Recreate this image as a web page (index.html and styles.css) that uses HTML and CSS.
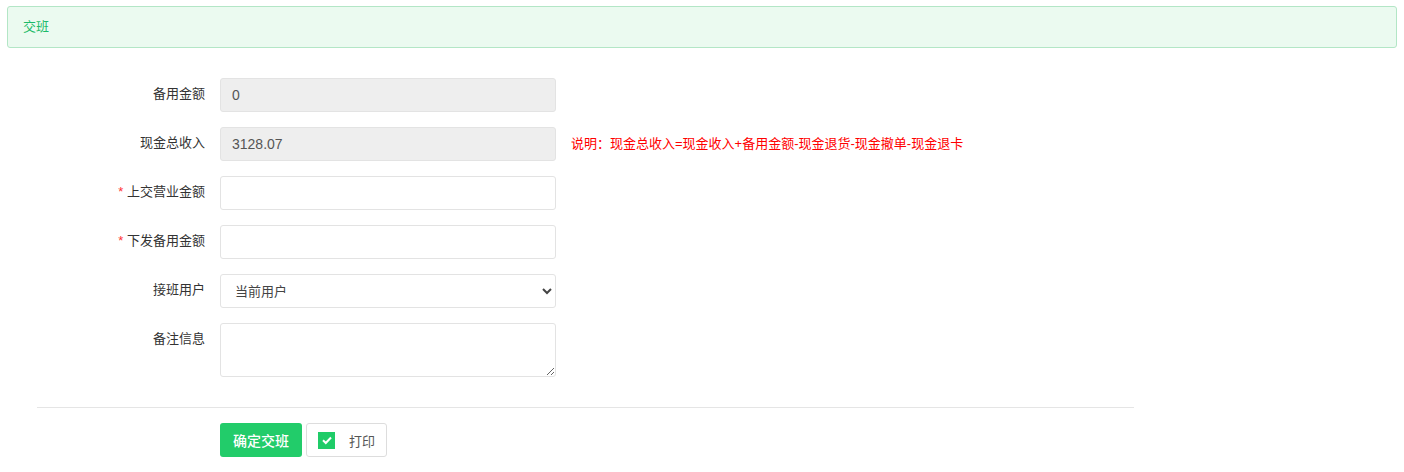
FILE: index.html
```html
<!DOCTYPE html>
<html lang="zh-cn">
  <head>
    <meta charset="utf-8" />
    <meta name="viewport" content="width=device-width, initial-scale=1" />
    <title>交班</title>
    <link rel="stylesheet" href="styles.css">
  </head>
  <body>
    <div class="page">
      <div class="alert">交班</div>

      <form class="shift-form">
        <div class="row">
          <label class="label">备用金额</label>
          <input class="field" type="text" value="0" readonly />
        </div>
        <div class="row">
          <label class="label">现金总收入</label>
          <input class="field" type="text" value="3128.07" readonly />
          <span class="tip">说明：现金总收入=现金收入+备用金额-现金退货-现金撤单-现金退卡</span>
        </div>
        <div class="row">
          <label class="label"><span class="req">*</span> 上交营业金额</label>
          <input class="field" type="text" />
        </div>
        <div class="row">
          <label class="label"><span class="req">*</span> 下发备用金额</label>
          <input class="field" type="text" />
        </div>
        <div class="row">
          <label class="label">接班用户</label>
          <select class="field">
            <option>当前用户</option>
          </select>
        </div>
        <div class="row">
          <label class="label">备注信息</label>
          <textarea class="field memo"></textarea>
        </div>

        <hr class="line" />

        <div class="actions">
          <button type="button" class="btn-ok">确定交班</button>
          <label class="check">
            <span class="box">
              <svg width="12" height="12" viewBox="0 0 12 12"><path d="M2 6.2 L4.8 9 L10 3.5" fill="none" stroke="#fff" stroke-width="2" /></svg>
            </span>
            打印
          </label>
        </div>
      </form>
    </div>
  </body>
</html>
```

FILE: styles.css
```css
html,
body {
  margin: 0;
  background: #fff;
  font-family: "Liberation Sans", "Noto Sans CJK SC", sans-serif;
  font-size: 13px;
  color: #333;
}

.page {
  padding: 6px 7px;
}

.alert {
  background: #ebfaf0;
  border: 1px solid #b3e6c6;
  border-radius: 3px;
  color: #1dba6a;
  height: 40px;
  line-height: 40px;
  padding: 0 15px;
}

.shift-form {
  width: 1097px;
  margin: 30px 0 0 30px;
}

.row {
  display: flex;
  align-items: flex-start;
  margin-bottom: 15px;
}

.label {
  width: 168px;
  text-align: right;
  line-height: 20px;
  padding-top: 6px;
  margin-right: 15px;
  color: #333;
}

.req {
  color: #f33;
}

.field {
  box-sizing: border-box;
  width: 336px;
  height: 34px;
  border: 1px solid #e3e3e3;
  border-radius: 3px;
  padding: 0 11px;
  font-family: "Liberation Sans", "Noto Sans CJK SC", sans-serif;
  font-size: 14px;
  color: #555;
  background: #fff;
  outline: none;
}

.field[readonly] {
  background: #eee;
}

select.field {
  padding: 0 10px;
  font-size: 13px;
  color: #444;
}

.memo {
  height: 54px;
  padding: 6px 11px;
}

.tip {
  margin-left: 15px;
  line-height: 34px;
  font-size: 13px;
  color: #f00;
}

.line {
  border: 0;
  border-top: 1px solid #e5e5e5;
  margin: 30px 0 15px;
}

.actions {
  display: flex;
  gap: 4px;
  padding-left: 183px;
}

.btn-ok {
  height: 34px;
  width: 82px;
  border: 0;
  border-radius: 3px;
  background: #22cc6a;
  color: #fff;
  font-family: "Liberation Sans", "Noto Sans CJK SC", sans-serif;
  font-size: 14px;
  font-weight: 500;
}

.check {
  box-sizing: border-box;
  height: 34px;
  width: 81px;
  border: 1px solid #ddd;
  border-radius: 3px;
  display: flex;
  align-items: center;
  padding-left: 11px;
  gap: 14px;
  color: #555;
}

.box {
  width: 17px;
  height: 17px;
  background: #1fcc68;
  display: flex;
  align-items: center;
  justify-content: center;
}
```
